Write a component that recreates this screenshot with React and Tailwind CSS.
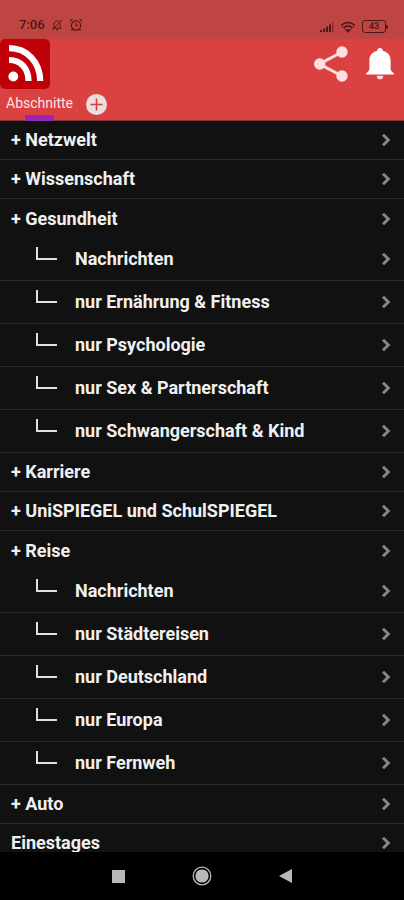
import React from "react";

const sections = [
  { title: "Netzwelt", expandable: true },
  { title: "Wissenschaft", expandable: true },
  {
    title: "Gesundheit",
    expandable: true,
    children: [
      "Nachrichten",
      "nur Ernährung & Fitness",
      "nur Psychologie",
      "nur Sex & Partnerschaft",
      "nur Schwangerschaft & Kind",
    ],
  },
  { title: "Karriere", expandable: true },
  { title: "UniSPIEGEL und SchulSPIEGEL", expandable: true },
  {
    title: "Reise",
    expandable: true,
    children: [
      "Nachrichten",
      "nur Städtereisen",
      "nur Deutschland",
      "nur Europa",
      "nur Fernweh",
    ],
  },
  { title: "Auto", expandable: true },
  { title: "Einestages", expandable: false },
];

function Chevron() {
  return (
    <svg className="h-3.5 w-2.5 shrink-0" viewBox="0 0 10 14" fill="none" stroke="#868686" strokeWidth="3" aria-hidden="true">
      <path d="M2 1.800 7.300 7 2 12.200" />
    </svg>
  );
}

function StatusBar() {
  return (
    <div className="flex h-[39px] shrink-0 items-end justify-between bg-[#be4542] px-4 pb-1.5 text-[#4c1715]">
      <div className="flex items-center gap-1.5 pl-[3px]">
        <span className="text-[13px] leading-4 font-medium">7:06</span>
        <svg className="size-3" viewBox="0 0 12 12" fill="none" stroke="currentColor" strokeWidth="1" aria-hidden="true">
          <path d="M2 9.200h8.200c-.9-.9-1.200-1.700-1.200-3.700 0-2.300-1.100-3.600-3-3.600S3 3.200 3 5.500C3 7.500 2.800 8.300 2 9.200ZM5 10.800h2M1 11 11 1" />
        </svg>
        <svg className="size-3.5" viewBox="0 0 14 14" fill="none" stroke="currentColor" strokeWidth="1.100" aria-hidden="true">
          <circle cx="7" cy="7.500" r="4.600" />
          <path d="M7 5v2.800h2M1 3.200 3.400 1.300M13 3.200l-2.400-1.900M3.600 11.200l-1.200 1.500M10.400 11.200l1.200 1.500" />
        </svg>
      </div>
      <div className="flex items-center gap-1.5">
        <svg className="h-3 w-3.5" viewBox="0 0 14 12" fill="currentColor" aria-hidden="true">
          <path d="M0 9h2v2H0zM3 7.500h2V11H3zM6 5.500h2V11H6zM9 3.500h2V11H9z" />
          <path d="M12 1.500h1.500V11H12z" opacity=".5" />
        </svg>
        <svg className="h-3 w-4" viewBox="0 0 16 12" fill="none" stroke="currentColor" strokeWidth="1.500" aria-hidden="true">
          <path d="M1.300 4.300c4-3.600 9.400-3.600 13.400 0M3.800 6.700c2.500-2.200 5.900-2.200 8.400 0" />
          <path d="M8 11.500 5.600 8.900c1.400-1.200 3.400-1.200 4.800 0Z" fill="currentColor" stroke="none" />
          <path d="M1.300 4.300 8 11.300l6.700-7" strokeWidth=".8" />
        </svg>
        <div className="flex items-center">
          <div className="flex h-[13px] w-6 items-center justify-center rounded-[3px] border border-current text-[9px] leading-none font-medium">43</div>
          <div className="h-1 w-0.5 rounded-r-sm bg-current" />
        </div>
      </div>
    </div>
  );
}

function Header() {
  return (
    <header className="shrink-0 border-b border-[#7d3432] bg-[#db4141]">
      <div className="flex h-[50px] items-center justify-between">
        <svg className="size-[50px]" viewBox="0 0 50 50" role="img" aria-label="RSS">
          <rect width="50" height="50" rx="5" fill="#bf0008" />
          <circle cx="13.300" cy="37.500" r="4.900" fill="#fff" />
          <path d="M9 21c12 0 19.500 8.500 19.500 21M9 9.200c18 0 31.200 14 31.200 32.800" fill="none" stroke="#fff" strokeWidth="6.200" />
        </svg>
        <div className="flex items-center gap-4 pr-2.5">
          <button type="button" aria-label="Teilen">
            <svg className="size-9" viewBox="0 0 36 36" fill="#ffe0e2" aria-hidden="true">
              <path d="M28 6 5.500 18 28 30" fill="none" stroke="#ffe0e2" strokeWidth="3" />
              <circle cx="28" cy="6" r="5.700" />
              <circle cx="5.700" cy="18" r="5.700" />
              <circle cx="28" cy="30" r="5.700" />
            </svg>
          </button>
          <button type="button" aria-label="Benachrichtigungen">
            <svg className="h-8 w-7" viewBox="0 0 28 32" fill="#fff" aria-hidden="true">
              <path d="M14 0c1.600 0 2.700 1 2.700 2.700C21.500 4 24.600 7 24.600 12v8c0 2.500 1 4 3.200 5v1.500H.2V25c2.200-1 3.200-2.500 3.200-5v-8c0-5 3.100-8 7.900-9.300C11.300 1 12.400 0 14 0Z" />
              <path d="M10.700 27.800h6.600c0 2.200-1.300 3.600-3.300 3.600s-3.300-1.400-3.300-3.600Z" fill="#ffd9dc" />
            </svg>
          </button>
        </div>
      </div>
      <nav className="flex h-[31px] items-stretch">
        <button type="button" className="flex flex-col items-center justify-between px-1.5 text-sm leading-6 font-normal text-[#fbe3e1]">
          <span className="pt-0.5">Abschnitte</span>
          <span className="h-1.5 w-[29px] shrink-0 bg-[#9a27b3]" />
        </button>
        <span className="my-2 w-px bg-[#c04748]" />
        <button type="button" aria-label="Hinzufügen" className="px-1.5">
          <svg className="size-[21px]" viewBox="0 0 21 21" aria-hidden="true">
            <circle cx="10.500" cy="10.500" r="10.500" fill="#e6dedf" />
            <path d="M10.500 4.500v12M4.500 10.500h12" stroke="#d63c3c" strokeWidth="1.600" />
          </svg>
        </button>
      </nav>
    </header>
  );
}

function SubRow({ label }) {
  return (
    <li className="h-[43px] border-b border-[#292929]">
      <button type="button" className="flex h-full w-full items-center pr-[13px] pl-9 text-left">
        <span className="mb-3 h-[13px] w-[21px] shrink-0 border-b-2 border-l-2 border-[#e0e0e0]" />
        <span className="flex-1 pl-[18px]">{label}</span>
        <Chevron />
      </button>
    </li>
  );
}

function Section({ section }) {
  const open = Boolean(section.children);
  return (
    <li>
      <button
        type="button"
        aria-expanded={section.expandable ? open : undefined}
        className={
          open
            ? "flex h-[39px] w-full items-center justify-between pr-[13px] pl-[11px] text-left"
            : "flex h-[39px] w-full items-center justify-between border-b border-[#292929] pr-[13px] pl-[11px] text-left"
        }
      >
        <span>{section.expandable ? "+ " + section.title : section.title}</span>
        <Chevron />
      </button>
      {open && (
        <ul>
          {section.children.map((label) => (
            <SubRow key={label} label={label} />
          ))}
        </ul>
      )}
    </li>
  );
}

function NavigationBar() {
  return (
    <nav className="flex h-12 shrink-0 items-center justify-center gap-[67px] bg-black">
      <button type="button" aria-label="Letzte Apps" className="size-[13px] bg-[#b9b9b9]" />
      <button type="button" aria-label="Startseite">
        <svg className="size-5" viewBox="0 0 20 20" aria-hidden="true">
          <circle cx="10" cy="10" r="8.800" fill="none" stroke="#b9b9b9" strokeWidth="1.300" />
          <circle cx="10" cy="10" r="6.600" fill="#b9b9b9" />
        </svg>
      </button>
      <button type="button" aria-label="Zurück">
        <svg className="h-3.5 w-[13px]" viewBox="0 0 13 14" fill="#b9b9b9" aria-hidden="true">
          <path d="M13 0v14L0 7Z" />
        </svg>
      </button>
    </nav>
  );
}

export default function App() {
  return (
    <div className="flex h-screen flex-col overflow-hidden bg-[#111111] font-['Roboto',sans-serif]">
      <StatusBar />
      <Header />
      <main className="min-h-0 flex-1 overflow-hidden text-lg font-bold text-[#f0f0f0]">
        <ul>
          {sections.map((section) => (
            <Section key={section.title} section={section} />
          ))}
        </ul>
      </main>
      <NavigationBar />
    </div>
  );
}
